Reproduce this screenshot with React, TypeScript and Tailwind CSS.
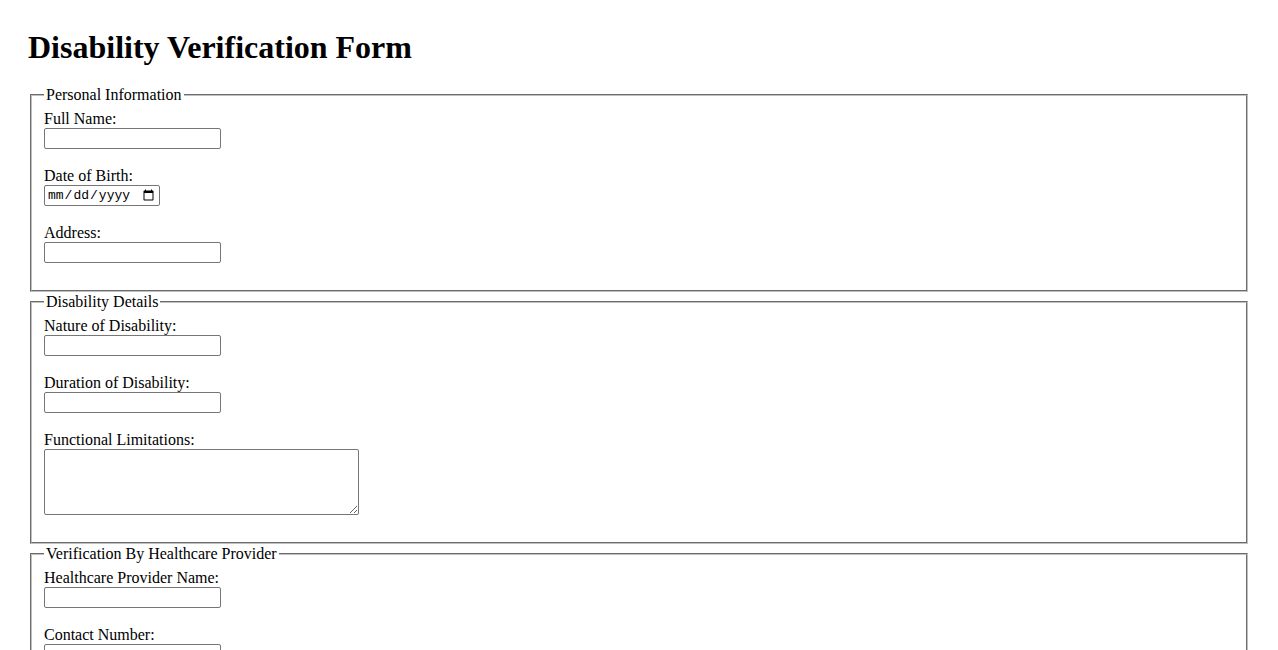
import React from 'react';

const inputCls =
    'mt-[-1px] block h-[21px] w-[177px] rounded-[2px] border border-[#767676] bg-white px-[2px] text-[13px] font-["Liberation_Sans",sans-serif]';

const Field: React.FC<{ id: string; label: string; type?: string }> = ({ id, label, type = 'text' }) => (
    <div className="mb-[17px]">
        <label htmlFor={id} className="block leading-[20px]">
            {label}
        </label>
        <input id={id} name={id} type={type} className={inputCls} />
    </div>
);

const Section: React.FC<{ title: string; children: React.ReactNode }> = ({ title, children }) => (
    <fieldset className="mx-[2px] border-2 border-[#c0c0c0] px-3 pt-[4px] pb-[10px] [border-style:groove]">
        <legend className="px-[2px] leading-[20px]">{title}</legend>
        {children}
    </fieldset>
);

export default function App() {
    return (
        <div className="min-h-screen bg-white px-[28px] pt-[29px] pb-8 font-['Liberation_Serif',serif] text-[16px] leading-[18px] text-black">
            <h1 className="mb-[19px] text-[32px] leading-[37px] font-bold">Disability Verification Form</h1>
            <form>
                <Section title="Personal Information">
                    <Field id="fullName" label="Full Name:" />
                    <div className="mb-[17px]">
                        <label htmlFor="dob" className="block leading-[20px]">
                            Date of Birth:
                        </label>
                        <input
                            id="dob"
                            name="dob"
                            type="date"
                            className="mt-[-1px] block h-[21px] w-[116px] rounded-[2px] border border-[#767676] bg-white px-[2px] text-[13px] font-['Liberation_Mono',monospace]"
                        />
                    </div>
                    <Field id="address" label="Address:" />
                </Section>

                <Section title="Disability Details">
                    <Field id="nature" label="Nature of Disability:" />
                    <Field id="duration" label="Duration of Disability:" />
                    <div className="mb-[17px]">
                        <label htmlFor="limitations" className="block leading-[20px]">
                            Functional Limitations:
                        </label>
                        <textarea
                            id="limitations"
                            name="limitations"
                            className="mt-[-1px] block h-[66px] w-[315px] resize rounded-[2px] border border-[#767676] bg-white px-[2px] text-[13px] font-['Liberation_Mono',monospace]"
                        />
                    </div>
                </Section>

                <Section title="Verification By Healthcare Provider">
                    <Field id="providerName" label="Healthcare Provider Name:" />
                    <Field id="contact" label="Contact Number:" type="tel" />
                    <Field id="license" label="License Number:" />
                </Section>
            </form>
        </div>
    );
}
